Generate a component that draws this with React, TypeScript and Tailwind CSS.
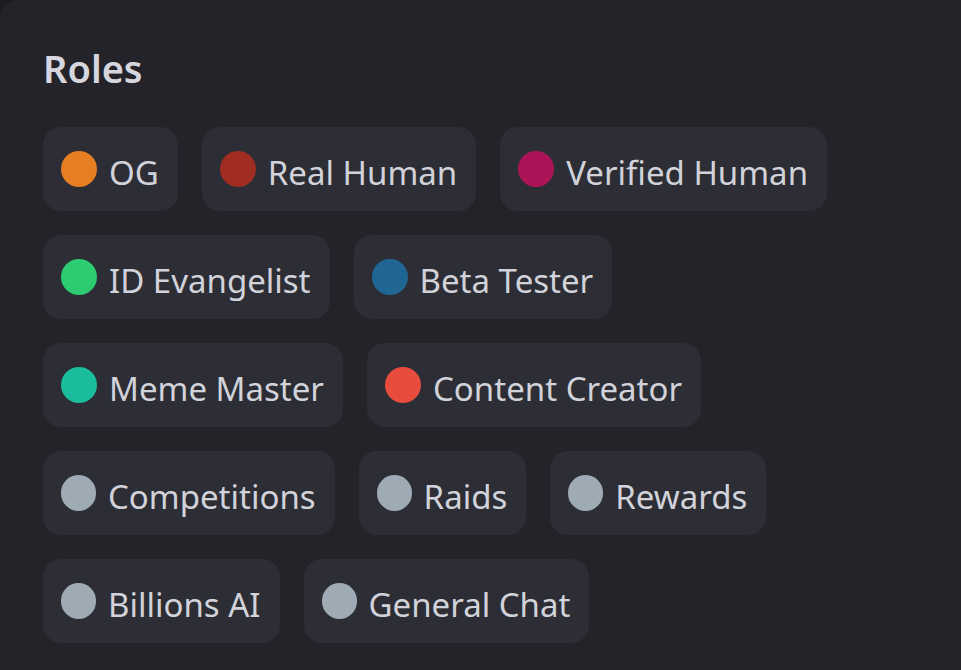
import React from 'react'

const rows: { name: string; color: string; gray?: boolean }[][] = [
  [
    { name: 'OG', color: '#e67e22' },
    { name: 'Real Human', color: '#a12d22' },
    { name: 'Verified Human', color: '#ad1457' },
  ],
  [
    { name: 'ID Evangelist', color: '#2ecc71' },
    { name: 'Beta Tester', color: '#206694' },
  ],
  [
    { name: 'Meme Master', color: '#1abc9c' },
    { name: 'Content Creator', color: '#e74c3c' },
  ],
  [
    { name: 'Competitions', color: '#9eabb4', gray: true },
    { name: 'Raids', color: '#9eabb4', gray: true },
    { name: 'Rewards', color: '#9eabb4', gray: true },
  ],
  [
    { name: 'Billions AI', color: '#9eabb4', gray: true },
    { name: 'General Chat', color: '#9eabb4', gray: true },
  ],
]

export default function App() {
  return (
    <div className="w-[961px] h-[670px] bg-[#1c1d21] overflow-hidden">
      <div className="w-full h-full bg-[#232329] rounded-tl-[18px] pl-[43px] pt-[42px] font-['Noto_Sans',sans-serif]">
        {/* Header */}
        <h2 className="text-[38px] leading-[52px] font-semibold text-[#d6d7de] mb-[33px]">Roles</h2>

        {/* Role chips */}
        <div className="flex flex-col gap-6">
          {rows.map((row, i) => (
            <div key={i} className="flex gap-6">
              {row.map((role) => (
                <div
                  key={role.name}
                  className="h-[84px] flex items-center gap-3 pl-[18px] pr-[19px] bg-[#2d2e35] rounded-[18px]"
                >
                  <span
                    className={role.gray ? 'w-[35px] h-[36px] rounded-full shrink-0' : 'w-[36px] h-[36px] rounded-full shrink-0'}
                    style={{ backgroundColor: role.color }}
                  />
                  <span className="text-[33px] leading-none text-[#d2d3da] pt-[7px]">{role.name}</span>
                </div>
              ))}
            </div>
          ))}
        </div>
      </div>
    </div>
  )
}
